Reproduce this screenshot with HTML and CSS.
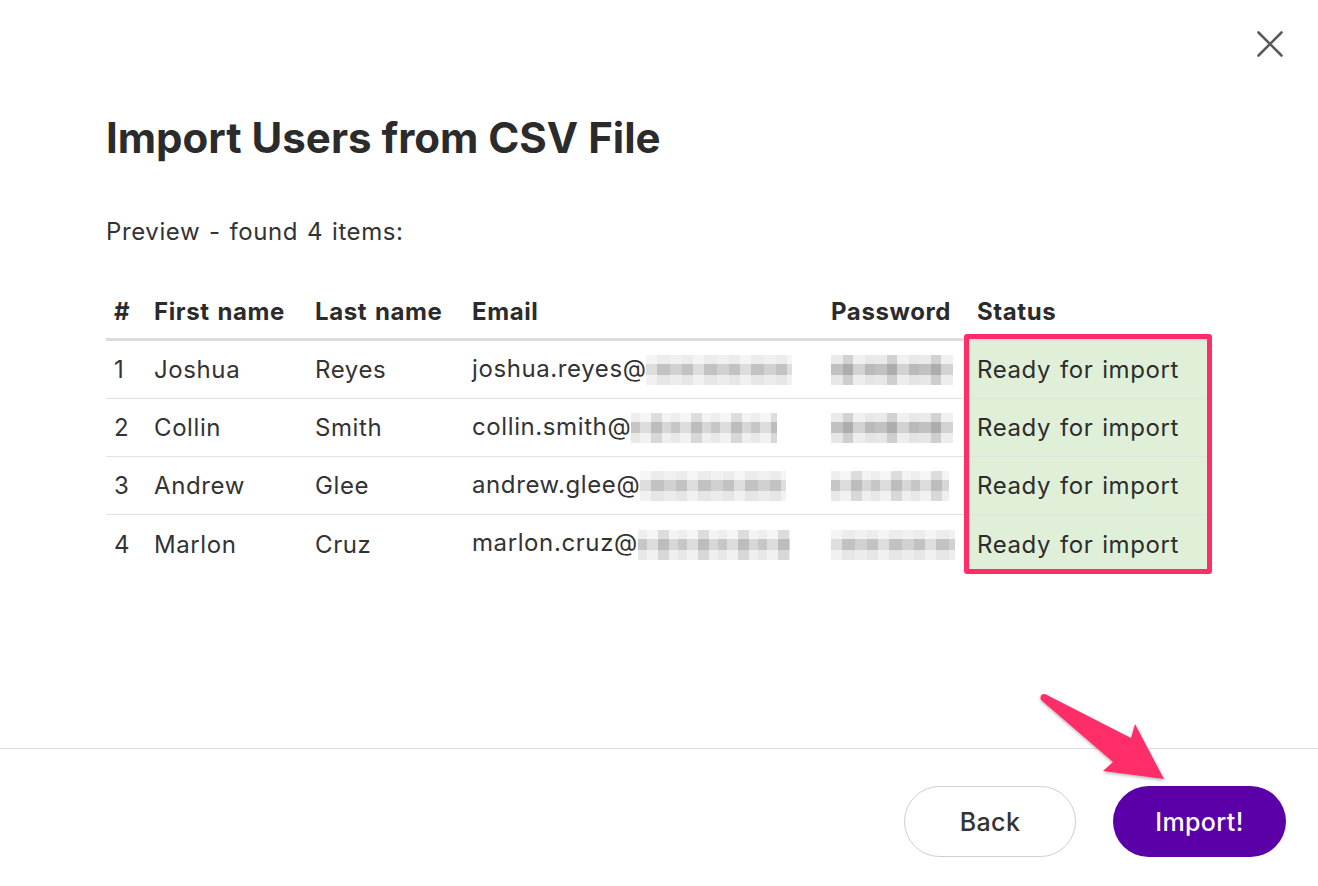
FILE: index.html
```html
<!DOCTYPE html>
<html>
    <head>
        <title>Import Users from CSV File</title>
        <meta charset="UTF-8">
        <link rel="stylesheet" href="styles.css">
    </head>
    <body>
        <div class="modal">
            <div class="topbar">
                <a class="close" href="#" title="Close">
                    <svg width="26" height="26" viewBox="0 0 26 26">
                        <path d="M1.5 1.5 L24.5 24.5 M24.5 1.5 L1.5 24.5" stroke="#5a5a5a" stroke-width="2.6" stroke-linecap="round" fill="none"/>
                    </svg>
                </a>
            </div>

            <div class="content">
                <h1>Import Users from CSV File</h1>
                <p class="found">Preview - found 4 items:</p>

                <!-- Таблица предпросмотра -->
                <div class="table-wrap">
                    <table class="preview">
                        <colgroup>
                            <col class="c-num">
                            <col class="c-first">
                            <col class="c-last">
                            <col class="c-email">
                            <col class="c-pass">
                            <col class="c-status">
                        </colgroup>
                        <thead>
                            <tr>
                                <th>#</th>
                                <th>First name</th>
                                <th>Last name</th>
                                <th>Email</th>
                                <th>Password</th>
                                <th>Status</th>
                            </tr>
                        </thead>
                        <tbody>
                            <tr>
                                <td>1</td>
                                <td>Joshua</td>
                                <td>Reyes</td>
                                <td>joshua.reyes@<span class="blur blur-a" style="width: 146px;"></span></td>
                                <td><span class="blur blur-b" style="width: 122px;"></span></td>
                                <td class="status">Ready for import</td>
                            </tr>
                            <tr>
                                <td>2</td>
                                <td>Collin</td>
                                <td>Smith</td>
                                <td>collin.smith@<span class="blur blur-c" style="width: 146px;"></span></td>
                                <td><span class="blur blur-b" style="width: 122px;"></span></td>
                                <td class="status">Ready for import</td>
                            </tr>
                            <tr>
                                <td>3</td>
                                <td>Andrew</td>
                                <td>Glee</td>
                                <td>andrew.glee@<span class="blur blur-a" style="width: 146px;"></span></td>
                                <td><span class="blur blur-c" style="width: 118px;"></span></td>
                                <td class="status">Ready for import</td>
                            </tr>
                            <tr>
                                <td>4</td>
                                <td>Marlon</td>
                                <td>Cruz</td>
                                <td>marlon.cruz@<span class="blur blur-c" style="width: 152px;"></span></td>
                                <td><span class="blur blur-a" style="width: 124px;"></span></td>
                                <td class="status">Ready for import</td>
                            </tr>
                        </tbody>
                    </table>
                    <div class="highlight"></div>
                </div>
            </div>

            <div class="footer">
                <a class="btn btn-back" href="#">Back</a>
                <a class="btn btn-import" href="#">Import!</a>
            </div>

            <!-- Стрелка-указатель -->
            <svg class="arrow" width="150" height="110" viewBox="1030 685 150 110">
                <defs>
                    <filter id="shadow" x="-20%" y="-20%" width="140%" height="140%">
                        <feDropShadow dx="0" dy="1.5" stdDeviation="1.5" flood-color="#000" flood-opacity="0.3"/>
                    </filter>
                </defs>
                <path d="M1041 700 Q1039 694 1045 694 L1131 738 L1135 724 L1164 779 L1103 771 L1113 762 Z" fill="#ff2d68" filter="url(#shadow)"/>
            </svg>
        </div>
    </body>
</html>
```

FILE: styles.css
```css
/* Общие стили */
body {
    margin: 0;
    background: #fff;
    font-family: "Inter", "Noto Sans", sans-serif;
    color: #333;
}
.modal {
    position: relative;
    height: 886px;
    overflow: hidden;
}

/* Кнопка закрытия */
.topbar {
    display: flex;
    justify-content: flex-end;
    padding: 31px 35px 0 0;
}
.close {
    display: block;
    width: 26px;
    height: 26px;
}
.close svg {
    display: block;
}

/* Заголовок */
.content {
    padding: 0 106px;
}
h1 {
    margin: 56px 0 0;
    font-size: 42px;
    line-height: 50px;
    font-weight: 700;
    color: #2b2b2b;
}
p.found {
    margin: 54px 0 0;
    font-size: 24px;
    line-height: 30px;
    letter-spacing: 0.6px;
    word-spacing: 1.5px;
    color: #333;
}

/* Таблица */
.table-wrap {
    position: relative;
    width: 1101px;
    margin-top: 38px;
}
table.preview {
    width: 1101px;
    table-layout: fixed;
    border-collapse: collapse;
}
col.c-num { width: 40px; }
col.c-first { width: 161px; }
col.c-last { width: 157px; }
col.c-email { width: 359px; }
col.c-pass { width: 146px; }
col.c-status { width: 238px; }

table.preview th {
    height: 53px;
    padding: 0 8px;
    text-align: left;
    vertical-align: middle;
    font-size: 24px;
    font-weight: 700;
    letter-spacing: 0.6px;
    word-spacing: 1.5px;
    color: #2b2b2b;
    border-bottom: 3px solid #dcdcdc;
    white-space: nowrap;
}
table.preview td {
    height: 57px;
    padding: 0 8px;
    font-size: 24px;
    letter-spacing: 0.6px;
    word-spacing: 1.5px;
    color: #333;
    white-space: nowrap;
    overflow: hidden;
    border-bottom: 1px solid #e2e2e2;
}
table.preview tbody tr:last-child td {
    border-bottom: none;
    height: 58px;
}
table.preview td.status {
    background: #dfefd8;
    color: #2d2d2d;
}

/* Размытые данные */
.blur {
    display: inline-block;
    height: 30px;
    vertical-align: middle;
}
.blur-a {
    background:
        repeating-linear-gradient(90deg, rgba(255,255,255,0.45) 0 11px, rgba(255,255,255,0) 11px 24px, rgba(255,255,255,0.25) 24px 36px, rgba(255,255,255,0) 36px 47px),
        linear-gradient(#ececec 0 30%, #c2c2c2 30% 66%, #e6e6e6 66% 100%);
}
.blur-b {
    background:
        repeating-linear-gradient(90deg, rgba(255,255,255,0.1) 0 12px, rgba(120,120,120,0.2) 12px 22px, rgba(255,255,255,0.35) 22px 34px, rgba(255,255,255,0) 34px 44px),
        linear-gradient(#e8e8e8 0 30%, #bababa 30% 66%, #e4e4e4 66% 100%);
}
.blur-c {
    background:
        repeating-linear-gradient(90deg, rgba(255,255,255,0) 0 9px, rgba(255,255,255,0.4) 9px 20px, rgba(150,150,150,0.2) 20px 31px, rgba(255,255,255,0.3) 31px 40px),
        linear-gradient(#eeeeee 0 30%, #c6c6c6 30% 66%, #e8e8e8 66% 100%);
}

/* Рамка выделения статуса */
.highlight {
    position: absolute;
    left: 858px;
    top: 49px;
    width: 238px;
    height: 230px;
    border: 5px solid #ff2d68;
    border-radius: 3px;
}

/* Подвал с кнопками */
.footer {
    position: absolute;
    left: 0;
    right: 0;
    top: 748px;
    display: flex;
    justify-content: flex-end;
    gap: 37px;
    padding: 37px 32px 0 0;
    border-top: 1px solid #dedede;
}
.btn {
    display: flex;
    align-items: center;
    justify-content: center;
    width: 172px;
    height: 71px;
    box-sizing: border-box;
    border-radius: 36px;
    font-size: 25px;
    font-weight: 500;
    letter-spacing: 0.4px;
    text-decoration: none;
}
.btn-back {
    border: 1px solid #cfcfcf;
    background: #fff;
    color: #333;
}
.btn-import {
    width: 173px;
    background: #5b00a9;
    color: #fff;
}

.arrow {
    position: absolute;
    left: 1030px;
    top: 685px;
}
```
